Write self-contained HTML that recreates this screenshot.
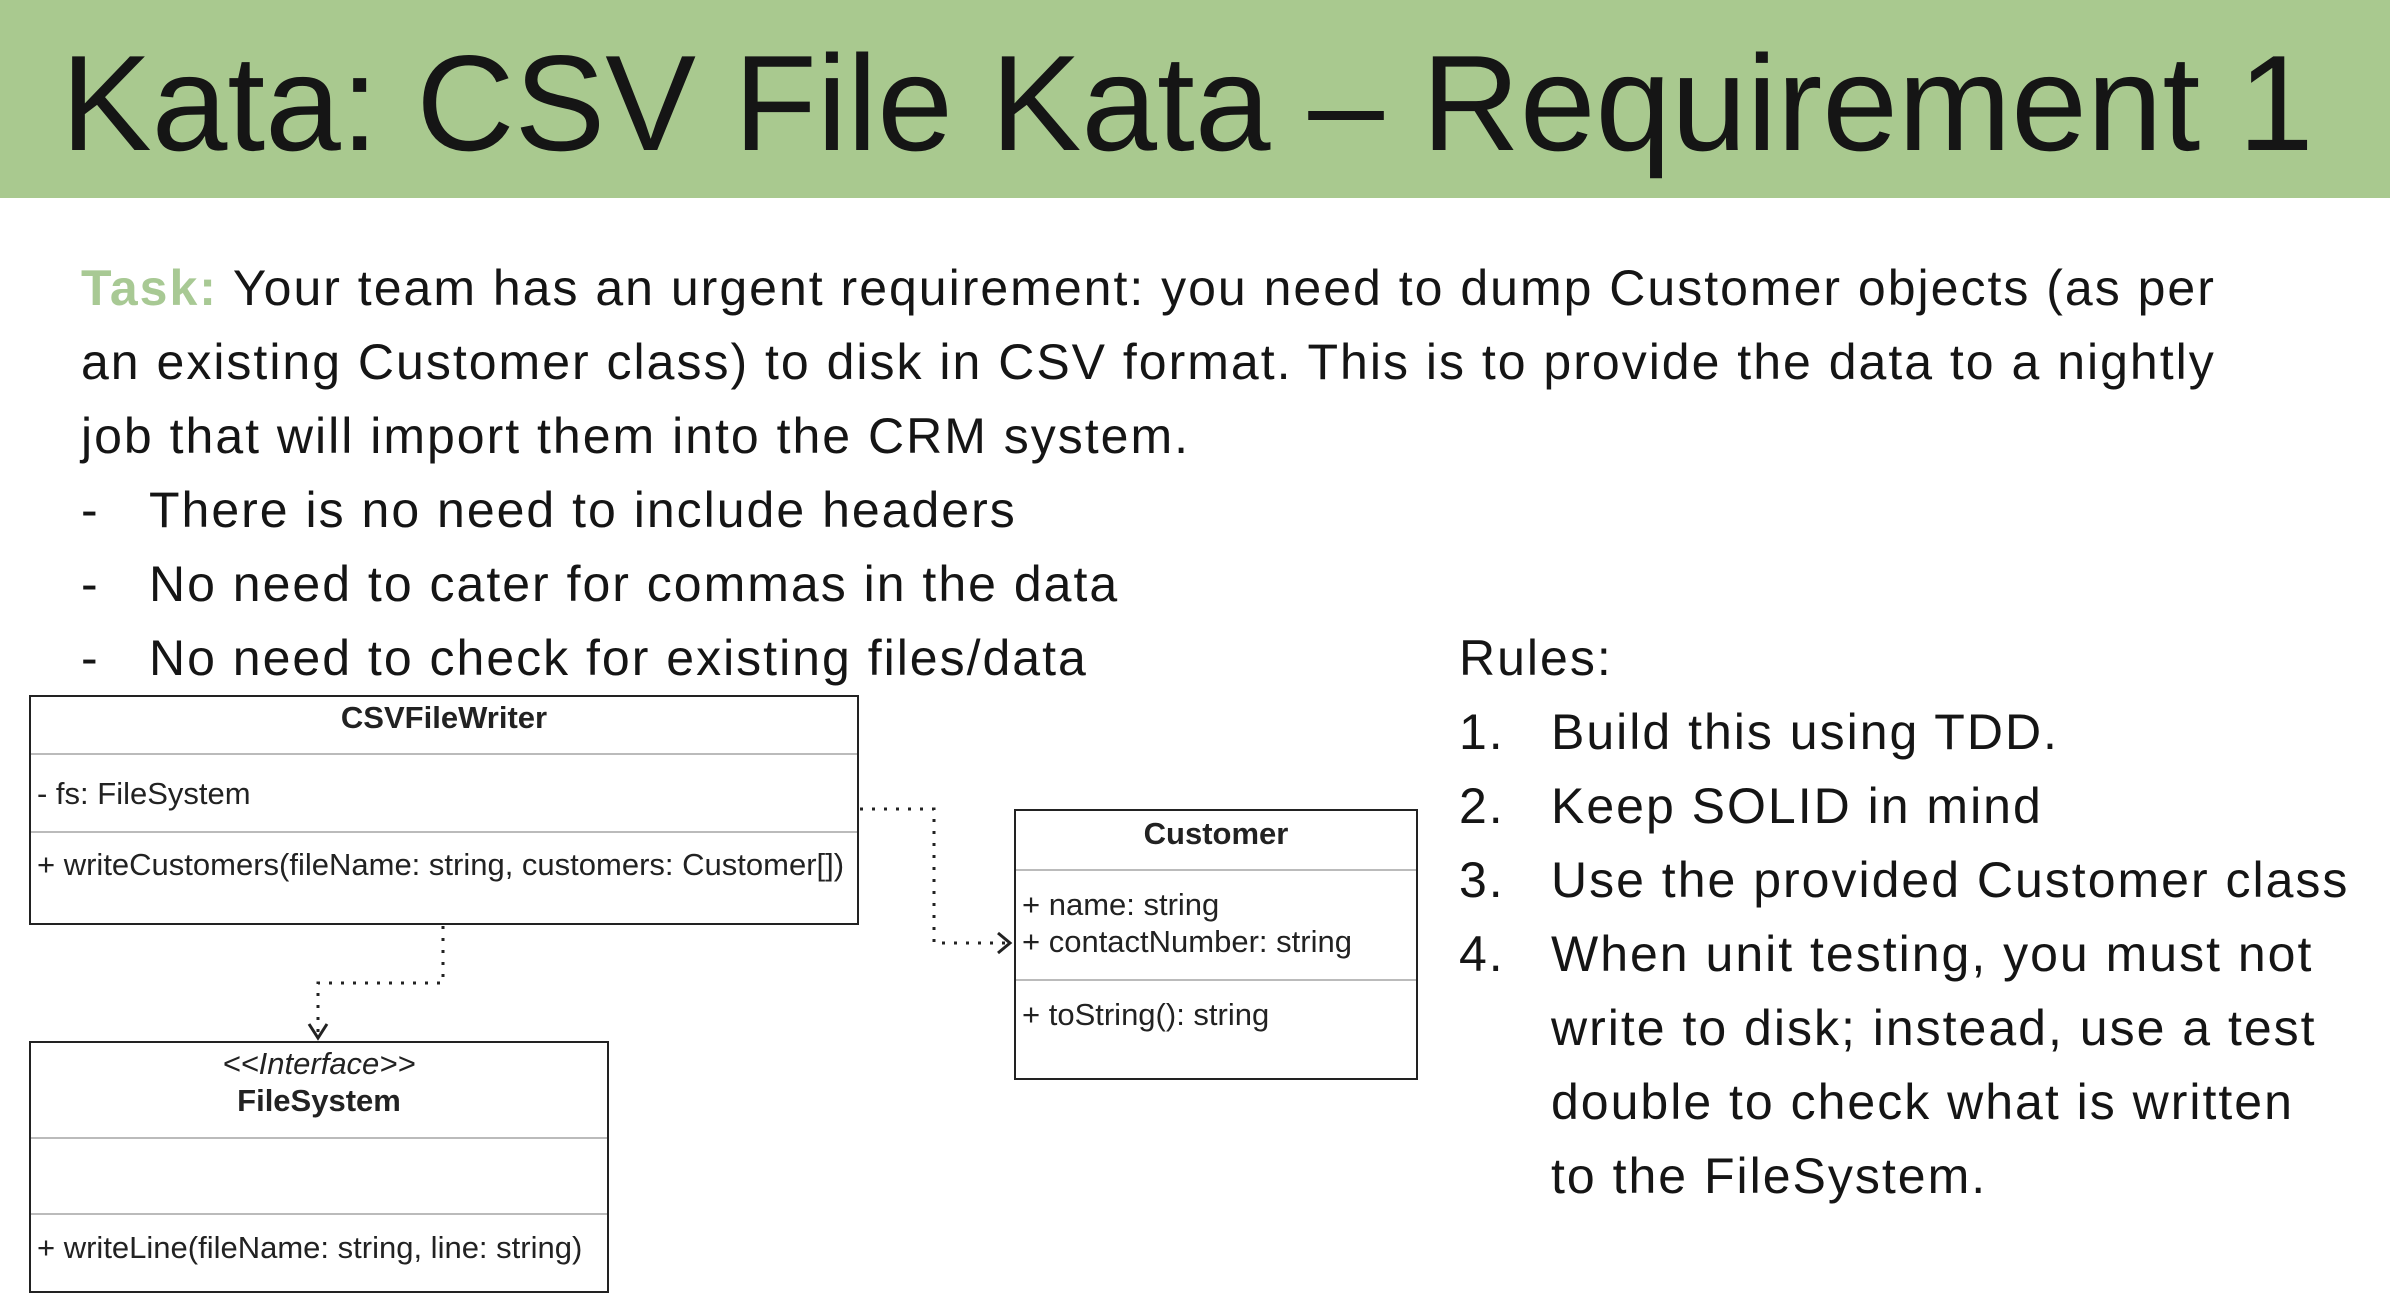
<!DOCTYPE html>
<html><head><meta charset="utf-8"><style>
*{margin:0;padding:0;box-sizing:border-box}
body{width:2390px;height:1309px;background:#fff;position:relative;overflow:hidden;font-family:"Liberation Sans",sans-serif;color:#111}
.hdr{position:absolute;left:0;top:0;width:2390px;height:198px;background:#a9c98f}
.title{position:absolute;left:61px;top:28px;font-size:136px;line-height:150px;white-space:nowrap;color:#151515}
.t{position:absolute;font-size:50px;line-height:60px;white-space:nowrap;color:#151515;letter-spacing:2px}
.box{position:absolute;border:2px solid #222;background:#fff}
.d{position:absolute;left:0;right:0;height:2px;background:#bbb}
.u{position:absolute;font-size:31px;line-height:34px;white-space:nowrap;color:#222}
.c{text-align:center;left:0;right:0}
</style></head><body>
<div class="hdr"></div>
<div class="title">Kata: CSV File Kata – Requirement 1</div>

<div class="t" style="left:81px;top:258px"><b style="color:#a8c994">Task:</b> Your team has an urgent requirement: you need to dump Customer objects (as per</div>
<div class="t" style="left:81px;top:332px">an existing Customer class) to disk in CSV format. This is to provide the data to a nightly</div>
<div class="t" style="left:81px;top:406px">job that will import them into the CRM system.</div>
<div class="t" style="left:81px;top:480px">-</div><div class="t" style="left:149px;top:480px">There is no need to include headers</div>
<div class="t" style="left:81px;top:554px">-</div><div class="t" style="left:149px;top:554px">No need to cater for commas in the data</div>
<div class="t" style="left:81px;top:628px">-</div><div class="t" style="left:149px;top:628px">No need to check for existing files/data</div>

<div class="t" style="left:1459px;top:628px">Rules:</div>
<div class="t" style="left:1459px;top:702px">1.</div><div class="t" style="left:1551px;top:702px">Build this using TDD.</div>
<div class="t" style="left:1459px;top:776px">2.</div><div class="t" style="left:1551px;top:776px">Keep SOLID in mind</div>
<div class="t" style="left:1459px;top:850px">3.</div><div class="t" style="left:1551px;top:850px">Use the provided Customer class</div>
<div class="t" style="left:1459px;top:924px">4.</div><div class="t" style="left:1551px;top:924px">When unit testing, you must not</div>
<div class="t" style="left:1551px;top:998px">write to disk; instead, use a test</div>
<div class="t" style="left:1551px;top:1072px">double to check what is written</div>
<div class="t" style="left:1551px;top:1146px">to the FileSystem.</div>

<div class="box" style="left:29px;top:695px;width:830px;height:230px">
 <div class="u c" style="top:4px;font-weight:bold">CSVFileWriter</div>
 <div class="d" style="top:56px"></div>
 <div class="u" style="left:6px;top:80px">- fs: FileSystem</div>
 <div class="d" style="top:134px"></div>
 <div class="u" style="left:6px;top:151px">+ writeCustomers(fileName: string, customers: Customer[])</div>
</div>
<div class="box" style="left:1014px;top:809px;width:404px;height:271px">
 <div class="u c" style="top:6px;font-weight:bold">Customer</div>
 <div class="d" style="top:58px"></div>
 <div class="u" style="left:6px;top:77px">+ name: string</div>
 <div class="u" style="left:6px;top:114px">+ contactNumber: string</div>
 <div class="d" style="top:168px"></div>
 <div class="u" style="left:6px;top:187px">+ toString(): string</div>
</div>
<div class="box" style="left:29px;top:1041px;width:580px;height:252px">
 <div class="u c" style="top:4px;font-style:italic">&lt;&lt;Interface&gt;&gt;</div>
 <div class="u c" style="top:41px;font-weight:bold">FileSystem</div>
 <div class="d" style="top:94px"></div>
 <div class="d" style="top:170px"></div>
 <div class="u" style="left:6px;top:188px">+ writeLine(fileName: string, line: string)</div>
</div>
<svg style="position:absolute;left:0;top:0" width="2390" height="1309">
 <g fill="none" stroke="#222" stroke-width="3" stroke-dasharray="3 9">
  <path d="M860 809 H934 V943 H1008"/>
  <path d="M443 926 V983 H318 V1034"/>
 </g>
 <g fill="none" stroke="#222" stroke-width="3">
  <path d="M998 933 L1010 943 L998 953"/>
  <path d="M309 1024 L318 1038 L327 1024"/>
 </g>
</svg>
</body></html>
